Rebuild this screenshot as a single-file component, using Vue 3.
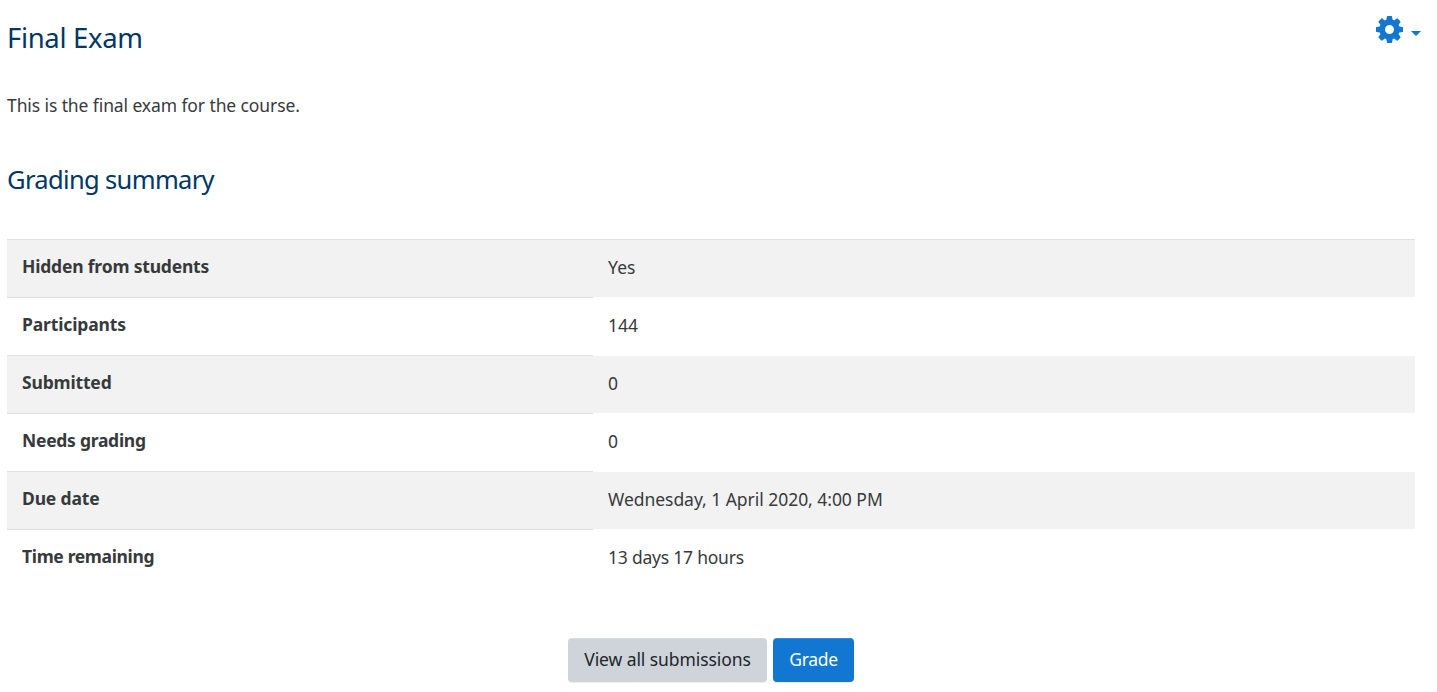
<script setup>
// `lt` and `vt` are the letter tracking, in px, of the label and the value
const rows = [
  { label: 'Hidden from students', value: 'Yes', lt: -0.19, vt: 0.1 },
  { label: 'Participants', value: '144', lt: -0.14, vt: -0.05 },
  { label: 'Submitted', value: '0', lt: -0.17, vt: 0 },
  { label: 'Needs grading', value: '0', lt: -0.27, vt: 0 },
  { label: 'Due date', value: 'Wednesday, 1 April 2020, 4:00 PM', lt: -0.17, vt: -0.04 },
  { label: 'Time remaining', value: '13 days 17 hours', lt: -0.35, vt: -0.22 },
]
</script>

<template>
  <main class="page">
    <header class="top">
      <h2><span>Final Exam</span></h2>
      <a class="menu" aria-label="Actions menu">
        <svg class="gear" viewBox="0 0 1536 1536" width="27" height="27">
          <path d="M1024 768q0-106-75-181t-181-75-181 75-75 181 75 181 181 75 181-75 75-181zm512-109v222q0 12-8 23t-20 13l-185 28q-19 54-39 91 35 50 107 138 10 12 10 25t-9 23q-27 37-99 108t-94 71q-12 0-26-9l-138-108q-44 23-91 38-16 136-29 186-7 28-36 28H657q-14 0-24.500-8.500T621 1506l-28-184q-49-16-90-37l-141 107q-10 9-25 9-14 0-25-11-126-114-165-168-7-10-7-23 0-12 8-23 15-21 51-66.500t54-70.500q-27-50-41-99L29 913q-13-2-21-12.500T0 877V655q0-12 8-23t19-13l186-28q14-46 39-92-40-57-107-138-10-12-10-24 0-10 9-23 26-36 98.500-107.500T337 135q13 0 26 10l138 107q44-23 91-38 16-136 29-186 7-28 36-28h222q14 0 24.500 8.500T915 30l28 184q49 16 90 37l142-107q9-9 24-9 13 0 25 10 129 119 165 170 7 8 7 22 0 12-8 23-15 21-51 66.500t-54 70.500q26 50 41 98l183 28q13 2 21 12.500t8 23.500z" />
        </svg>
        <i class="caret"></i>
      </a>
    </header>
    <p class="intro">This is the final exam for the course.</p>
    <h3><span>Grading summary</span></h3>
    <div class="table">
      <div v-for="row in rows" :key="row.label" class="row">
        <div class="th"><span :style="{ letterSpacing: row.lt + 'px' }">{{ row.label }}</span></div>
        <div class="td"><span :style="{ letterSpacing: row.vt + 'px' }">{{ row.value }}</span></div>
      </div>
    </div>
    <div class="actions">
      <button class="btn secondary">View all submissions</button>
      <button class="btn primary">Grade</button>
    </div>
  </main>
</template>

<style>
body {
  background: #fff;
}
</style>

<style scoped>
.page {
  box-sizing: border-box;
  height: 692px;
  padding: 0 16px 0 7px;
  overflow: hidden;
  font-family: "Noto Sans", "Open Sans", sans-serif;
  font-size: 17.5px;
  line-height: 27px;
  letter-spacing: -0.35px;
  color: #373a3c;
  white-space: nowrap;
}
.top {
  display: flex;
  justify-content: space-between;
  height: 92px;
}
h2, h3 {
  margin: 0;
  font-weight: 400;
  color: #003764;
}
h2 {
  padding-top: 20px;
  font-size: 27.5px;
  line-height: 36px;
  letter-spacing: -0.33px;
}
h3 {
  margin-top: 44px;
  font-size: 25.5px;
  line-height: 32px;
  letter-spacing: -0.65px;
}
.intro {
  margin: 0;
  letter-spacing: -0.1px;
}
.menu {
  display: flex;
  align-items: flex-start;
  padding-top: 16px;
}
.gear {
  fill: #1177d1;
}
.caret {
  margin: 15px 0 0 8px;
  border: 5px solid transparent;
  border-top-color: #1177d1;
  border-bottom: 0;
}
.table {
  width: 1408px;
  margin-top: 44px;
}
.row {
  display: grid;
  grid-template-columns: 586px 1fr;
  height: 58px;
}
.th, .td {
  box-sizing: border-box;
  padding: 14px 15px;
  border-top: 1px solid #dee0e4;
}
.th {
  padding-top: 13px;
  font-weight: 700;
}
.row:nth-child(odd) > div {
  background: #f2f2f2;
}
.row:not(:first-child) .td {
  border-top-color: #fff;
}
.actions {
  display: flex;
  gap: 6px;
  margin: 51px 0 0 561px;
}
.btn {
  box-sizing: border-box;
  height: 44px;
  padding: 0 0 1px;
  border: 0;
  border-radius: 4px;
  font: inherit;
  letter-spacing: inherit;
}
.secondary {
  width: 199px;
  background: #ced4da;
  color: #212529;
  letter-spacing: -0.08px;
  box-shadow: inset 0 1px 0 rgba(255, 255, 255, 0.15), 0 1px 1px rgba(0, 0, 0, 0.075);
}
.primary {
  width: 81px;
  background: #1177d1;
  color: #fff;
  box-shadow: inset 0 1px 0 rgba(255, 255, 255, 0.15), 0 1px 1px rgba(0, 0, 0, 0.075);
}
</style>
